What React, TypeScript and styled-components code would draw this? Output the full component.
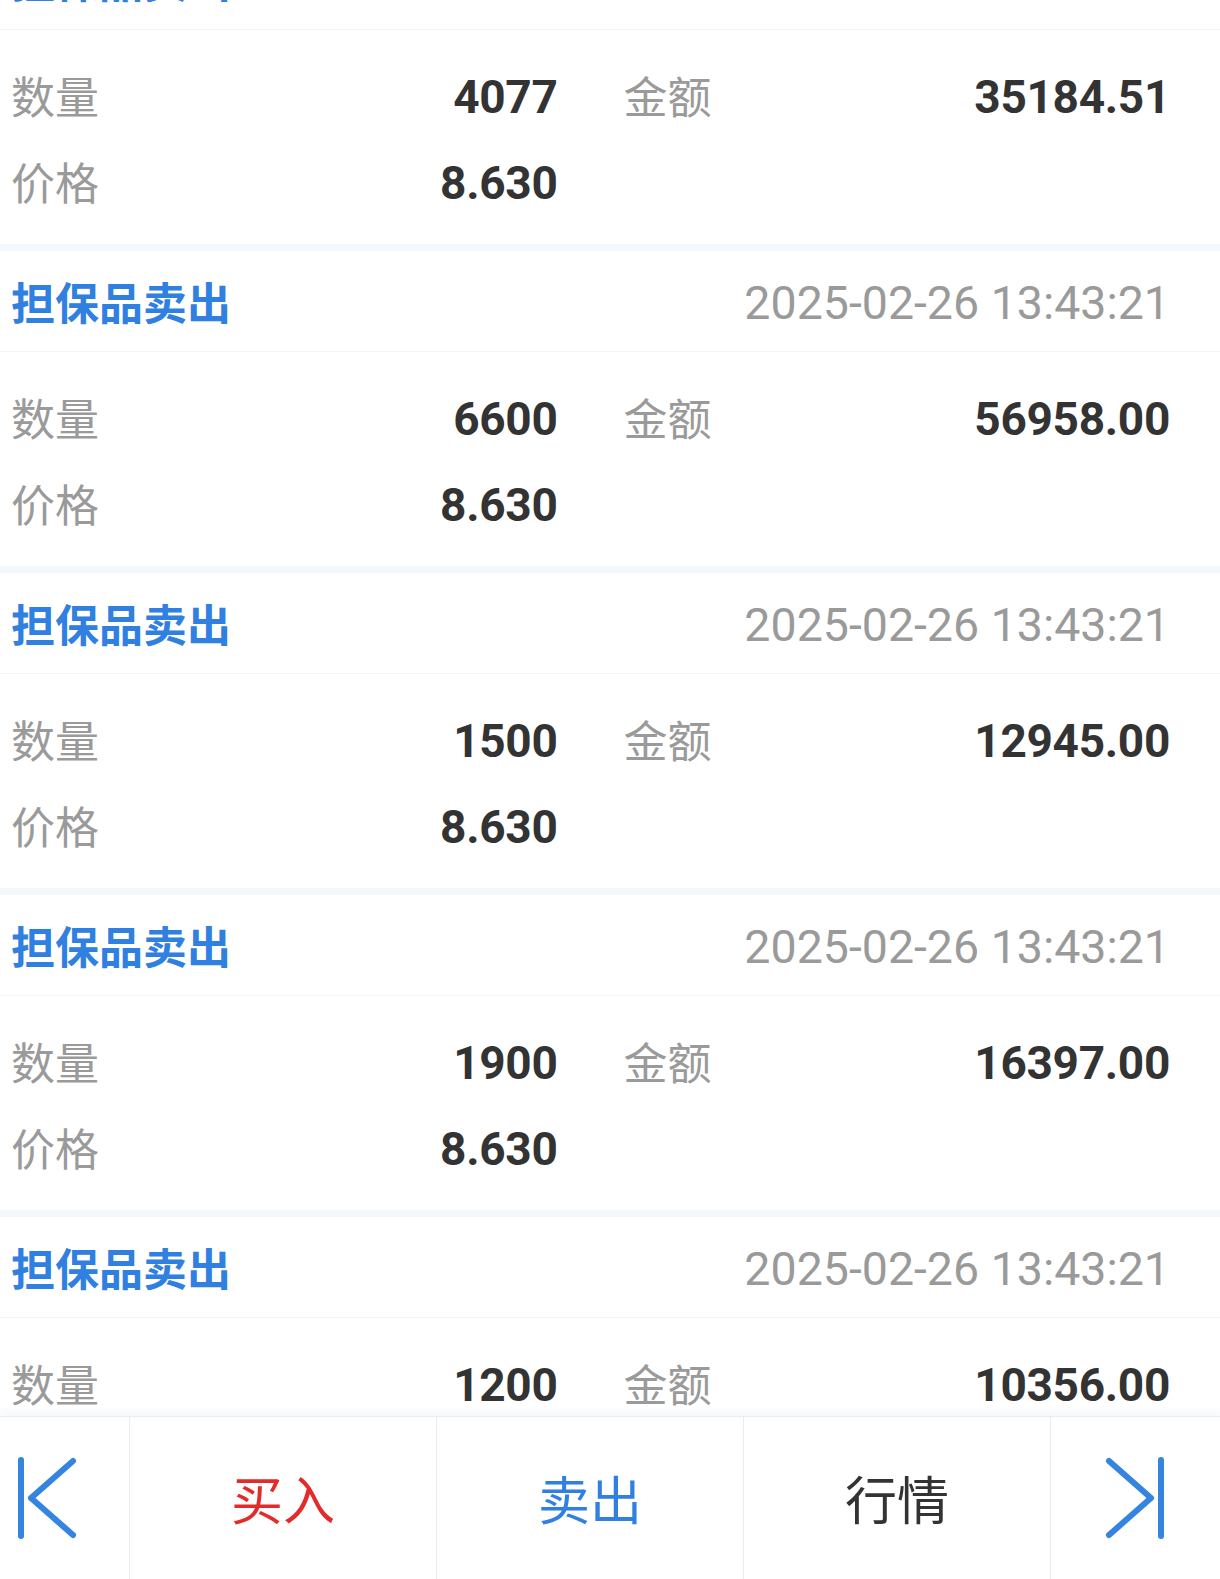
import React from "react";
import styled, { createGlobalStyle } from "styled-components";

const GlobalStyle = createGlobalStyle`
  html, body { margin: 0; padding: 0; background: #ffffff; }
  body { font-family: "Noto Sans CJK SC", "Noto Sans", sans-serif; }
  * { box-sizing: border-box; }
`;

const CJK = `"Noto Sans CJK SC", "Noto Sans", sans-serif`;
const NUM = `Roboto, "Noto Sans CJK SC", sans-serif`;

const Page = styled.div`
  height: 100vh;
  display: flex;
  flex-direction: column;
  overflow: hidden;
  background: #ffffff;
`;

const ListViewport = styled.div`
  flex: 1;
  overflow: hidden;
`;

const List = styled.div`
  margin-top: -78px;
  display: flex;
  flex-direction: column;
`;

const Card = styled.section`
  display: flex;
  flex-direction: column;
  background: #ffffff;
  border-top: 7px solid #f4f7fb;
`;

const CardHeader = styled.div`
  height: 101px;
  display: flex;
  align-items: center;
  justify-content: space-between;
  padding: 0 50px 0 11px;
  border-bottom: 1px solid #f3f4f6;
`;

const Title = styled.div`
  font-family: ${CJK};
  font-weight: 700;
  font-size: 44px;
  line-height: 1;
  color: #2f80e0;
`;

const DateTime = styled.div`
  font-family: ${NUM};
  font-weight: 400;
  font-size: 46.5px;
  line-height: 1;
  padding-top: 5px;
  color: #9a9a9a;
`;

const CardBody = styled.div`
  display: grid;
  grid-template-columns: 1fr 1fr;
  grid-auto-rows: 86px;
  column-gap: 66px;
  padding: 22px 50px 20px 11px;
`;

const Field = styled.div`
  display: flex;
  align-items: center;
  justify-content: space-between;
`;

const Label = styled.span`
  font-family: ${CJK};
  font-size: 44px;
  line-height: 1;
  color: #9a9a9a;
`;

const Value = styled.span`
  font-family: ${NUM};
  font-weight: 700;
  font-size: 46px;
  line-height: 1;
  padding-top: 4px;
  letter-spacing: -0.3px;
  color: #333333;
`;

const BottomBar = styled.nav`
  height: 163px;
  flex: none;
  display: grid;
  grid-template-columns: 129px 307px 307px 307px 1fr;
  background: #ffffff;
  border-top: 1px solid #e8ebf0;
  box-shadow: 0 -6px 6px rgba(40, 90, 160, 0.035);
  position: relative;
`;

const NavCell = styled.button<{ $divider?: boolean; $pad?: number; $color?: string }>`
  appearance: none;
  border: none;
  background: transparent;
  margin: 0;
  padding: 0 0 0 ${(p) => (p.$pad !== undefined ? `${p.$pad}px` : "0")};
  display: flex;
  align-items: center;
  justify-content: ${(p) => (p.$pad !== undefined ? "flex-start" : "center")};
  border-left: ${(p) => (p.$divider ? "1px solid #ececef" : "none")};
  font-family: ${CJK};
  font-size: 52px;
  line-height: 1;
  color: ${(p) => p.$color || "#333333"};
  cursor: pointer;
`;

const FirstIcon = () => (
  <svg width="64" height="86" viewBox="0 0 64 86" fill="none">
    <g stroke="#3584e0" strokeWidth="6" strokeLinecap="round" strokeLinejoin="round">
      <line x1="4" y1="5" x2="4" y2="81" />
      <polyline points="56,6 14,43 56,80" />
    </g>
  </svg>
);

const LastIcon = () => (
  <svg width="64" height="86" viewBox="0 0 64 86" fill="none">
    <g stroke="#3584e0" strokeWidth="6" strokeLinecap="round" strokeLinejoin="round">
      <line x1="60" y1="5" x2="60" y2="81" />
      <polyline points="8,6 50,43 8,80" />
    </g>
  </svg>
);

type Trade = { qty: string; amount: string; price: string; time: string };

const trades: Trade[] = [
  { qty: "4077", amount: "35184.51", price: "8.630", time: "2025-02-26 13:43:21" },
  { qty: "6600", amount: "56958.00", price: "8.630", time: "2025-02-26 13:43:21" },
  { qty: "1500", amount: "12945.00", price: "8.630", time: "2025-02-26 13:43:21" },
  { qty: "1900", amount: "16397.00", price: "8.630", time: "2025-02-26 13:43:21" },
  { qty: "1200", amount: "10356.00", price: "8.630", time: "2025-02-26 13:43:21" },
];

const TradeCard = ({ t }: { t: Trade }) => (
  <Card>
    <CardHeader>
      <Title>担保品卖出</Title>
      <DateTime>{t.time}</DateTime>
    </CardHeader>
    <CardBody>
      <Field>
        <Label>数量</Label>
        <Value>{t.qty}</Value>
      </Field>
      <Field>
        <Label>金额</Label>
        <Value>{t.amount}</Value>
      </Field>
      <Field>
        <Label>价格</Label>
        <Value>{t.price}</Value>
      </Field>
    </CardBody>
  </Card>
);

export default function App() {
  return (
    <>
      <GlobalStyle />
      <Page>
        <ListViewport>
          <List>
            {trades.map((t, i) => (
              <TradeCard key={i} t={t} />
            ))}
          </List>
        </ListViewport>
        <BottomBar>
          <NavCell $pad={17} aria-label="first">
            <FirstIcon />
          </NavCell>
          <NavCell $divider $color="#e52a2a">买入</NavCell>
          <NavCell $divider $color="#2f80e0">卖出</NavCell>
          <NavCell $divider $color="#333333">行情</NavCell>
          <NavCell $divider $pad={50} aria-label="last">
            <LastIcon />
          </NavCell>
        </BottomBar>
      </Page>
    </>
  );
}
